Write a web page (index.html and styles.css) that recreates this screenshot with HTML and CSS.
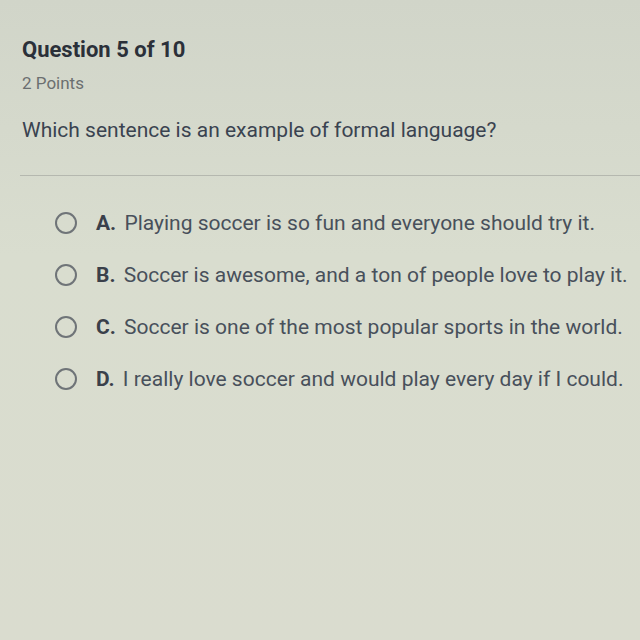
FILE: index.html
```html
<!DOCTYPE html>
<html>
<head>
<meta charset="utf-8">
<link rel="stylesheet" href="styles.css">
</head>
<body>
<div class="page">
  <header class="head">
    <h1 class="title">Question 5 of 10</h1>
    <div class="points">2 Points</div>
    <p class="prompt">Which sentence is an example of formal language?</p>
  </header>
  <hr class="divider">
  <ul class="options">
    <li class="option"><span class="radio"></span><span class="text"><b>A.</b> Playing soccer is so fun and everyone should try it.</span></li>
    <li class="option"><span class="radio"></span><span class="text"><b>B.</b> Soccer is awesome, and a ton of people love to play it.</span></li>
    <li class="option"><span class="radio"></span><span class="text"><b>C.</b> Soccer is one of the most popular sports in the world.</span></li>
    <li class="option"><span class="radio"></span><span class="text"><b>D.</b> I really love soccer and would play every day if I could.</span></li>
  </ul>
</div>
</body>
</html>
```

FILE: styles.css
```css
html, body {
  margin: 0;
  padding: 0;
  height: 100%;
}
body {
  background: linear-gradient(180deg, #d1d5c9 0%, #d9ddcf 40%, #dadccf 100%);
  font-family: Roboto, "Noto Sans", sans-serif;
  color: #3d4551;
}
.page {
  padding-top: 37px;
}
.head {
  padding-left: 22px;
}
.title {
  margin: 0;
  font-size: 22px;
  font-weight: 700;
  color: #2b3039;
  line-height: 26px;
}
.points {
  margin-top: 10px;
  font-size: 17px;
  color: #6b6f70;
  line-height: 20px;
}
.prompt {
  margin: 24px 0 0 0;
  font-size: 21px;
  line-height: 26px;
  color: #3a4350;
}
.divider {
  margin: 32px 0 0 20px;
  border: 0;
  border-top: 1px solid #b5b8af;
  height: 0;
}
.options {
  list-style: none;
  margin: 34px 0 0 0;
  padding: 0 0 0 55px;
  display: flex;
  flex-direction: column;
  gap: 26px;
}
.option {
  display: flex;
  align-items: center;
  gap: 19px;
  height: 26px;
}
.radio {
  width: 18px;
  height: 18px;
  border: 2.5px solid #6f7478;
  border-radius: 50%;
  flex: none;
}
.text {
  font-size: 21px;
  line-height: 26px;
  color: #48505b;
}
.text b {
  color: #3a404a;
  margin-right: 3px;
}
```
